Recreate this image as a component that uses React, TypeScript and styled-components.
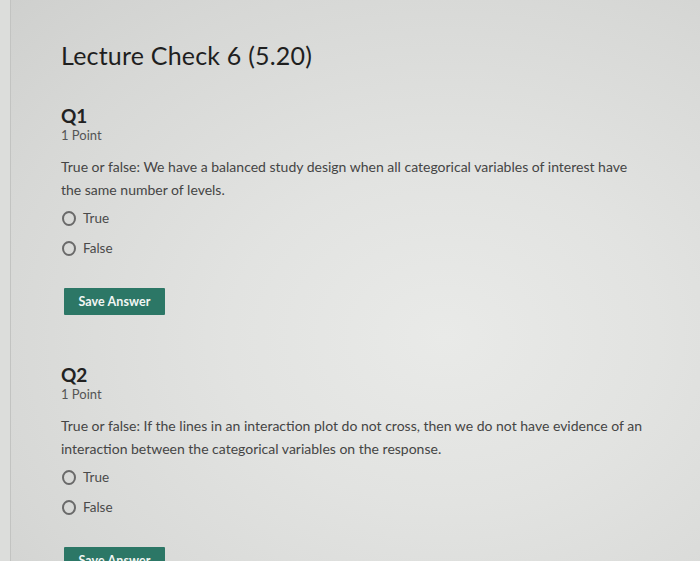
import React from 'react';
import styled, { createGlobalStyle } from 'styled-components';

const GlobalStyle = createGlobalStyle`
    html, body {
        margin: 0;
        padding: 0;
        height: 100%;
        overflow: hidden;
    }
    body {
        font-family: Lato, "Open Sans", "Liberation Sans", sans-serif;
        background: #dcdddb;
    }
`;

// STYLE
const Page = styled.div`
    position: relative;
    width: 700px;
    height: 561px;
    overflow: hidden;
    background: radial-gradient(ellipse at 62% 60%, #e9eae8 0%, #e2e3e1 35%, #d7d8d6 75%, #cfd0ce 100%);
    border-left: 1px solid #c2c3c1;
    margin-left: 10px;
    box-sizing: border-box;
    padding: 40px 0 0 50px;
`;

const Title = styled.h1`
    margin: 0;
    font-size: 25px;
    font-weight: 400;
    color: #1f1f1f;
    line-height: 30px;
    letter-spacing: 0.2px;
`;

const Question = styled.section`
    display: flex;
    flex-direction: column;
    align-items: flex-start;
    margin-top: ${(p: { first?: boolean }) => (p.first ? '35px' : '49px')};
`;

const QNumber = styled.h2`
    margin: 0;
    font-size: 19px;
    font-weight: 700;
    color: #222;
    line-height: 22px;
`;

const Points = styled.div`
    font-size: 13px;
    color: #555;
    line-height: 17px;
`;

const Prompt = styled.p`
    margin: 11px 0 8px;
    width: 586px;
    font-size: 14px;
    color: #454545;
    line-height: 23px;
`;

const Options = styled.div`
    display: flex;
    flex-direction: column;
    gap: 12px;
`;

const Option = styled.label`
    display: flex;
    align-items: center;
    gap: 7px;
    font-size: 13.5px;
    color: #4a4a4a;
    line-height: 18px;
    padding-left: 1px;
`;

const Radio = styled.span`
    width: 10px;
    height: 11px;
    border: 2px solid #6a6a6a;
    border-radius: 50%;
    background: transparent;
`;

const SaveButton = styled.button`
    margin-top: 31px;
    margin-left: 3px;
    width: 101px;
    height: 27px;
    border: none;
    border-radius: 1px;
    background: #2c7766;
    color: #f2f6f4;
    font-family: inherit;
    font-size: 12.5px;
    font-weight: 700;
    letter-spacing: 0.1px;
`;

type QuestionData = {
    id: string;
    text: string;
};

const questions: QuestionData[] = [
    {
        id: 'Q1',
        text: 'True or false: We have a balanced study design when all categorical variables of interest have the same number of levels.',
    },
    {
        id: 'Q2',
        text: 'True or false: If the lines in an interaction plot do not cross, then we do not have evidence of an interaction between the categorical variables on the response.',
    },
];

const App: React.FC = () => {
    return (
        <Page>
            <GlobalStyle />
            {/* SECTION :: TITLE */}
            <Title>Lecture Check 6 (5.20)</Title>

            {/* SECTION :: QUESTIONS */}
            {questions.map((q, i) => (
                <Question key={q.id} first={i === 0}>
                    <QNumber>{q.id}</QNumber>
                    <Points>1 Point</Points>
                    <Prompt>{q.text}</Prompt>
                    <Options>
                        <Option>
                            <Radio />
                            True
                        </Option>
                        <Option>
                            <Radio />
                            False
                        </Option>
                    </Options>
                    <SaveButton>Save Answer</SaveButton>
                </Question>
            ))}
        </Page>
    );
};

export default App;
